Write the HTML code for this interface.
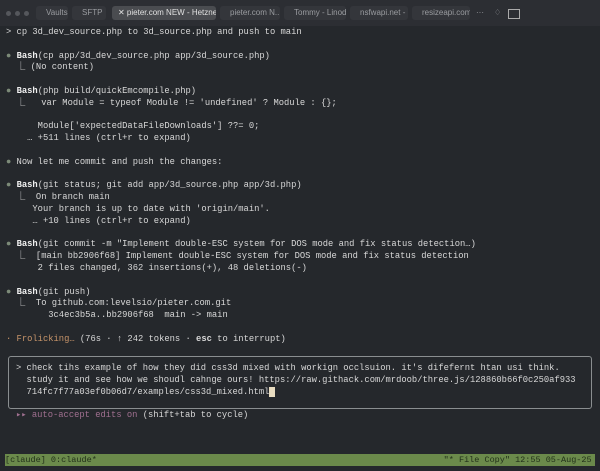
<!DOCTYPE html><html><head><style>
body{margin:0;width:600px;height:471px;background:#25282c;overflow:hidden;font-family:"Liberation Mono",monospace;color:#d8d8d8}
.tabs{position:absolute;left:0;top:0;width:600px;height:26px;background:#2c2e33;font-family:"Liberation Sans",sans-serif;font-size:8px;color:#9a9ca0}
.tab{position:absolute;top:6px;height:14px;line-height:14px;border-radius:3px;background:#34363b;padding-left:10px;box-sizing:border-box;white-space:nowrap;overflow:hidden}
.dot{position:absolute;top:11px;width:5px;height:5px;border-radius:50%;background:#55575c}
.t{position:absolute;left:6px;font-size:8.8px;line-height:11.8px;white-space:pre}
.b{color:#7c8a78}.w{color:#f0f0f0;font-weight:bold}
.box{position:absolute;left:8px;top:356px;width:584px;height:53px;border:1px solid #8a8e90;border-radius:3px;box-sizing:border-box}
.st{position:absolute;left:5px;top:454px;width:590px;height:12px;background:#6b8a4b;color:#22301a;font-size:8.5px;line-height:12px;white-space:pre}
</style></head><body>
<div class="tabs">
<div class="dot" style="left:6px"></div><div class="dot" style="left:15px"></div><div class="dot" style="left:24px"></div>
<div class="tab" style="left:36px;width:32px">Vaults</div>
<div class="tab" style="left:72px;width:34px">SFTP</div>
<div class="tab" style="left:112px;width:104px;background:#4a4c50;color:#e0e0e0;padding-left:6px">✕ pieter.com NEW - Hetzner</div>
<div class="tab" style="left:220px;width:60px">pieter.com N...</div>
<div class="tab" style="left:284px;width:62px">Tommy - Linode</div>
<div class="tab" style="left:350px;width:58px">nsfwapi.net - ...</div>
<div class="tab" style="left:412px;width:58px">resizeapi.com</div>
<div style="position:absolute;left:476px;top:8px">···</div>
<div style="position:absolute;left:494px;top:8px">♢</div>
<div style="position:absolute;left:508px;top:9px;width:10px;height:8px;border:1px solid #aaa"></div>
</div>
<div class="t" style="top:27px">&gt; cp 3d_dev_source.php to 3d_source.php and push to main

<span class="b">●</span> <span class="w">Bash</span>(cp app/3d_dev_source.php app/3d_source.php)
  ⎿ (No content)

<span class="b">●</span> <span class="w">Bash</span>(php build/quickEmcompile.php)
  ⎿   var Module = typeof Module != 'undefined' ? Module : {};

      Module['expectedDataFileDownloads'] ??= 0;
    … +511 lines (ctrl+r to expand)

<span class="b">●</span> Now let me commit and push the changes:

<span class="b">●</span> <span class="w">Bash</span>(git status; git add app/3d_source.php app/3d.php)
  ⎿  On branch main
     Your branch is up to date with 'origin/main'.
     … +10 lines (ctrl+r to expand)

<span class="b">●</span> <span class="w">Bash</span>(git commit -m "Implement double-ESC system for DOS mode and fix status detection…)
  ⎿  [main bb2906f68] Implement double-ESC system for DOS mode and fix status detection
      2 files changed, 362 insertions(+), 48 deletions(-)

<span class="b">●</span> <span class="w">Bash</span>(git push)
  ⎿  To github.com:levelsio/pieter.com.git
        3c4ec3b5a..bb2906f68  main -&gt; main

<span style="color:#c8956a">· Frolicking… </span>(76s · ↑ 242 tokens · <b>esc</b> to interrupt)</div>
<div class="box"></div>
<div class="t" style="top:363px;left:16px">&gt; check tihs example of how they did css3d mixed with workign occlsuion. it's difefernt htan usi think.
  study it and see how we shoudl cahnge ours! https://raw.githack.com/mrdoob/three.js/128860b66f0c250af933
  714fc7f77a03ef0b06d7/examples/css3d_mixed.html<span style="background:#e8dcc0">&nbsp;</span></div>
<div class="t" style="top:410px;left:16px"><span style="color:#a07090">▸▸ auto-accept edits on</span> (shift+tab to cycle)</div>
<div class="st">[claude] 0:claude*                                                                    "* File Copy" 12:55 05-Aug-25</div>
</body></html>
